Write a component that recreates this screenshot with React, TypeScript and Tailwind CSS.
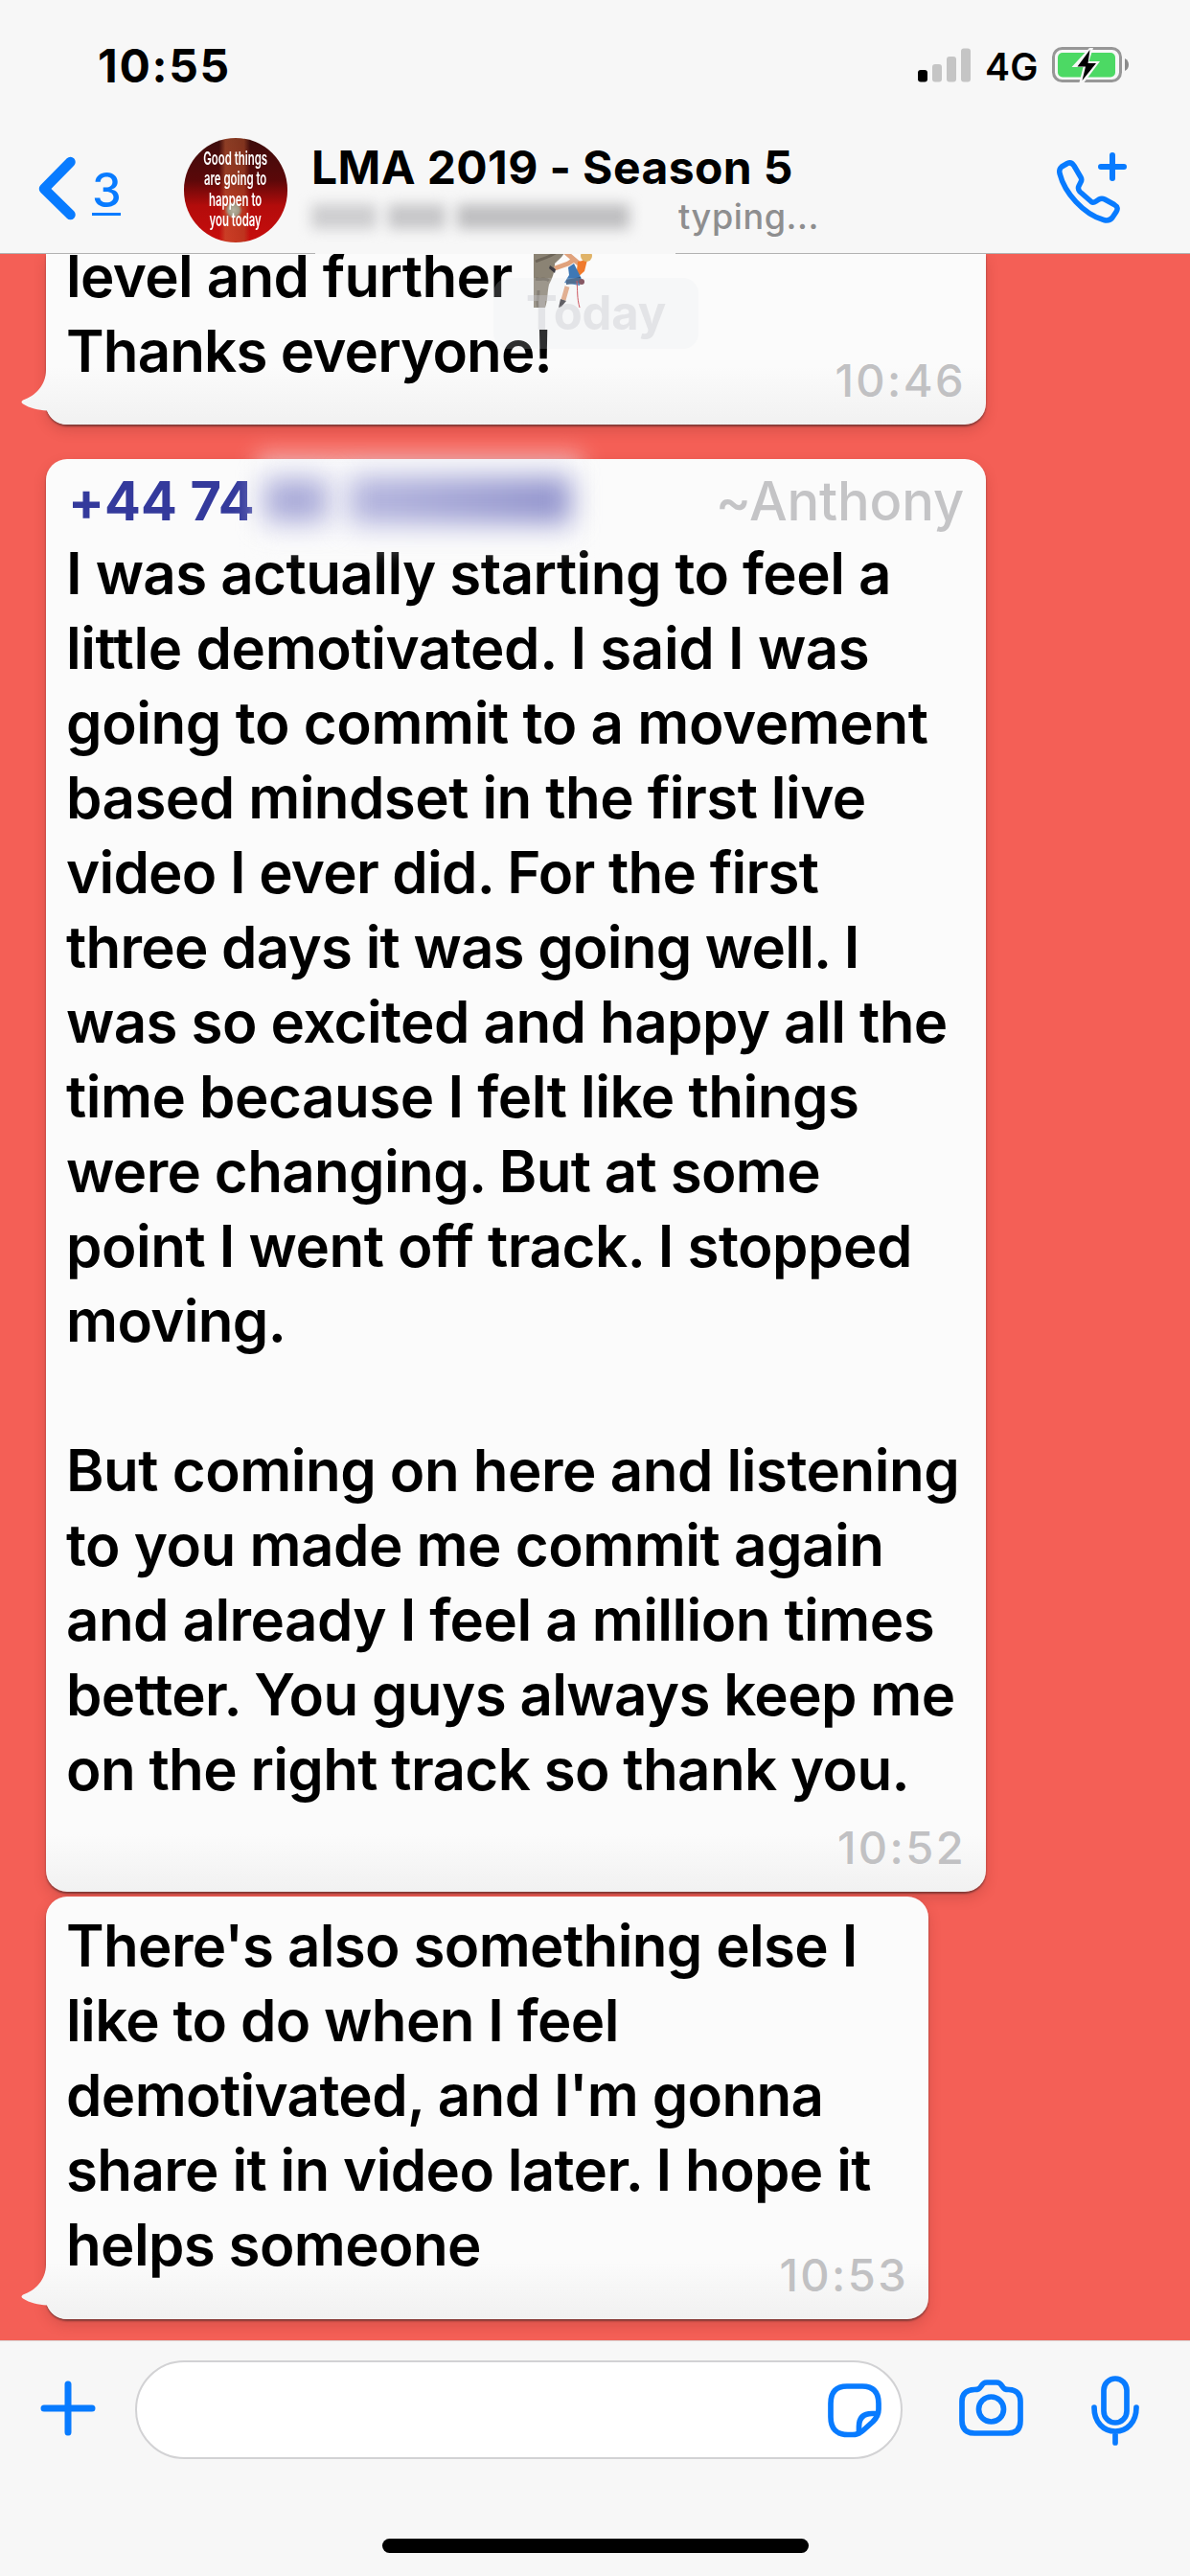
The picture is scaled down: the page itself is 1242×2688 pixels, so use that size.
import type { ReactNode } from "react";

type Line = {
  text: string;
  tracking?: string;
};

const STORY: Line[] = [
  { text: "I was actually starting to feel a", tracking: "tracking-[-0.550px]" },
  { text: "little demotivated. I said I was", tracking: "tracking-[-0.400px]" },
  { text: "going to commit to a movement", tracking: "tracking-[-0.400px]" },
  { text: "based mindset in the first live", tracking: "tracking-[-0.550px]" },
  { text: "video I ever did. For the first", tracking: "tracking-[-0.750px]" },
  { text: "three days it was going well. I", tracking: "tracking-[-0.750px]" },
  { text: "was so excited and happy all the", tracking: "tracking-[-0.550px]" },
  { text: "time because I felt like things", tracking: "tracking-[-0.480px]" },
  { text: "were changing. But at some" },
  { text: "point I went off track. I stopped", tracking: "tracking-[-0.480px]" },
  { text: "moving." },
  { text: "" },
  { text: "But coming on here and listening", tracking: "tracking-[-0.480px]" },
  { text: "to you made me commit again", tracking: "tracking-[-0.480px]" },
  { text: "and already I feel a million times", tracking: "tracking-[-0.550px]" },
  { text: "better. You guys always keep me" },
  { text: "on the right track so thank you." },
];

const FOLLOW_UP: Line[] = [
  { text: "There's also something else I" },
  { text: "like to do when I feel" },
  { text: "demotivated, and I'm gonna" },
  { text: "share it in video later. I hope it" },
  { text: "helps someone" },
];

export default function App() {
  return (
    <div className="flex h-[2688px] w-[1242px] flex-col overflow-hidden bg-[#f7f7f7] font-['Inter','Liberation_Sans',sans-serif] text-black">
      <StatusBar />
      <ChatHeader />
      <Conversation />
      <Composer />
    </div>
  );
}

function StatusBar() {
  return (
    <div className="flex h-[136px] shrink-0 items-start justify-between pt-[40px] pr-[63px] pl-[102px]">
      <div className="text-[48px] leading-[58px] font-bold tracking-[1.700px]">10:55</div>
      <div className="flex items-start">
        <svg className="mt-[10px] h-[36px] w-[56px]" viewBox="0 0 56 36">
          <rect x="0" y="23" width="10" height="12.5" rx="3" fill="#000" />
          <rect x="15" y="17" width="10" height="18.5" rx="3" fill="#c5c5c5" />
          <rect x="30" y="9" width="10" height="26.5" rx="3" fill="#c5c5c5" />
          <rect x="45" y="0.5" width="10" height="35" rx="3" fill="#c5c5c5" />
        </svg>
        <div className="mt-[7px] ml-[14px] w-[70px] text-[39px] leading-[46px] font-semibold tracking-[0.300px]">
          4G
        </div>
        <svg className="mt-[8px] h-[40px] w-[81px]" viewBox="0 0 81 40">
          <rect x="1.5" y="2.5" width="70" height="34" rx="9" fill="none" stroke="#979797" strokeWidth="3" />
          <rect x="6" y="7" width="60" height="25.5" rx="5" fill="#4cd964" />
          <path d="M76 13c3 1.500 4 4 4 6.500s-1 5-4 6.500z" fill="#8b8b8b" />
          <path
            d="M39 2 20.500 22h12L28.500 38h5L50 16H38.500L43 2z"
            fill="#f7f7f7"
          />
          <path d="M39.500 4 26.500 21.500h8.500L31.500 36 46 18h-8.500z" fill="#000" />
        </svg>
      </div>
    </div>
  );
}

function ChatHeader() {
  return (
    <div className="h-[129px] shrink-0">
      <div className="flex h-[128px] items-start pl-[38px]">
        <svg className="mt-[27px] h-[68px] w-[42px]" viewBox="0 0 42 68" fill="none">
          <path
            d="M35.500 6 8 34l27.500 27"
            stroke="#087bff"
            strokeWidth="10.500"
            strokeLinecap="round"
            strokeLinejoin="round"
          />
        </svg>
        <div className="mt-[32px] ml-[16px] h-[57px] w-[30px] border-b-[3px] border-[#087bff] text-center text-[49px] leading-[61px] font-medium text-[#087bff]">
          3
        </div>
        <Avatar />
        <div className="mt-[10px] ml-[25px] flex-1">
          <div className="text-[48px] leading-[57px] font-bold tracking-[0.400px] whitespace-nowrap">
            LMA 2019 - Season 5
          </div>
          <div className="mt-[1px] flex h-[44px] items-start">
            <div className="mt-[9px] flex h-[26px] w-[383px] gap-3 blur-[7px]">
              <div className="h-full w-[68px] bg-[#cdcdcf]" />
              <div className="h-full w-[60px] bg-[#c6c6c8]" />
              <div className="h-full w-[180px] bg-[#bebec0]" />
            </div>
            <div className="text-[36px] leading-[44px] font-medium tracking-[0.600px] text-[#8e8e8f]">typing...</div>
          </div>
        </div>
        <svg
          className="mt-[20px] mr-[61px] h-[78px] w-[80px]"
          viewBox="0 0 80 78"
          fill="none"
          stroke="#087bff"
          strokeLinecap="round"
          strokeLinejoin="round"
        >
          <path
            d="M7 18 13 14.500Q17 12.500 20 17L27 29Q28.500 31.500 27 34L25 38Q23.500 41 26 44L38 54.500Q40 56 43 54L46 52Q49 50.500 52 52L62 57.500Q67 60.500 64 65L60 71Q57 75 51 73.500C30 68 10 45 5 25Q4 20.500 7 18Z"
            strokeWidth="5.500"
          />
          <path d="M60 6v24M48 18h24" strokeWidth="6" />
        </svg>
      </div>
      {/* hairline, interrupted under the masked number */}
      <div className="flex h-px justify-between">
        <div className="w-[329px] bg-[#b2b2b2]" />
        <div className="w-[537px] bg-[#b2b2b2]" />
      </div>
    </div>
  );
}

function Avatar() {
  return (
    <div className="mt-[8px] ml-[66px] flex h-[109px] w-[108px] items-center justify-center overflow-hidden rounded-full bg-[radial-gradient(circle_at_48%_69%,#b9b2a0_0,#a09a84_6%,transparent_10%),linear-gradient(90deg,transparent_34%,#d0683b88_40%,#b9552d88_58%,transparent_64%),linear-gradient(180deg,#3c0d0c_0%,#5a0809_40%,#b30c0b_65%,#c80d0d_100%)]">
      <div className="-mt-[2px] scale-x-[0.600] text-center text-[19px] leading-[21.300px] font-semibold whitespace-nowrap text-white">
        Good things
        <br />
        are going to
        <br />
        happen to
        <br />
        you today
      </div>
    </div>
  );
}

function Conversation() {
  return (
    <div className="flex h-[2177px] shrink-0 flex-col items-start overflow-hidden bg-[#f45f56] pl-[48px]">
      <Bubble className="h-[178px] w-[981px] rounded-b-[22px]" time="10:46" tail>
        <div className="-mt-[16px] flex items-start">
          <TextLine line={{ text: "level and further" }} />
          <Climber />
        </div>
        <TextLine line={{ text: "Thanks everyone!", tracking: "tracking-[-0.850px]" }} />
        <div className="absolute top-[25px] left-[467px] flex h-[74px] w-[214px] items-center justify-center rounded-[16px] bg-[#e4ebf2]/20 text-[49px] font-bold tracking-[-0.200px] text-[#c9c9cc]/40">
          Today
        </div>
      </Bubble>

      <Bubble className="mt-[36px] h-[1495px] w-[981px] rounded-[22px] pt-[12px]" time="10:52">
        <div className="flex h-[68px] items-start justify-between pr-[23px]">
          <div className="pl-[2px] text-[56px] leading-[65px] font-bold tracking-[0.100px] text-[#343a9c]">+44 74</div>
          <div className="text-[56px] leading-[65px] font-medium tracking-[-0.150px] text-[#c4c4c6]">~Anthony</div>
        </div>
        {STORY.map((line, i) => (
          <TextLine key={i} line={line} />
        ))}
        {/* masked part of the phone number */}
        <div className="absolute top-[-6px] left-[220px] flex h-[98px] w-[340px] items-center">
          <div className="absolute inset-0 bg-[#fbfbfd]/50 blur-[12px]" />
          <div className="relative ml-[8px] h-[46px] w-[66px] bg-[#a9aad8] blur-[14px]" />
          <div className="relative ml-[22px] h-[50px] w-[232px] bg-[linear-gradient(90deg,#b5b6de,#9092cc)] blur-[14px]" />
        </div>
      </Bubble>

      <Bubble className="mt-[5px] h-[441px] w-[921px] rounded-[22px] pt-[12px]" time="10:53" tail>
        {FOLLOW_UP.map((line, i) => (
          <TextLine key={i} line={line} />
        ))}
      </Bubble>
    </div>
  );
}

function Bubble(props: { className: string; time: string; tail?: boolean; children: ReactNode }) {
  const { className, time, tail, children } = props;

  return (
    <div
      className={`relative shrink-0 bg-[linear-gradient(180deg,#fbfbfb_calc(100%-60px),#f1f1f1_100%)] pl-[21px] shadow-[0_2px_2px_rgba(70,40,40,0.6),0_6px_14px_rgba(90,20,20,0.18)] ${className}`}
    >
      {tail ? <Tail /> : null}
      {children}
      <div className="absolute right-[21px] bottom-[18px] text-[47px] leading-[56px] font-medium tracking-[2.400px] text-[#c1c1c3]">
        {time}
      </div>
    </div>
  );
}

function Tail() {
  return (
    <svg className="absolute bottom-0 left-[-26px] h-[63px] w-[48px] overflow-visible" viewBox="0 0 48 63">
      <defs>
        <linearGradient id="tail" x1="0" y1="0" x2="0" y2="1">
          <stop offset="0.050" stopColor="#fbfbfb" />
          <stop offset="1" stopColor="#f1f1f1" />
        </linearGradient>
      </defs>
      <path
        d="M26 0V6C26 22 15 33 2 37.500Q-1 39.500 2 41.500C9 46 18 48 27 48.500C30 57 38 63 48 63V0Z"
        fill="url(#tail)"
      />
    </svg>
  );
}

function TextLine({ line }: { line: Line }) {
  return (
    <div
      className={`h-[78px] text-[60px] leading-[78px] font-semibold whitespace-nowrap ${line.tracking ?? "tracking-[-0.640px]"}`}
    >
      {line.text}
    </div>
  );
}

function Climber() {
  return (
    <svg className="mt-[10px] ml-[22px] h-[62px] w-[66px]" viewBox="0 0 66 62">
      <path d="M0 0h34c-2 8-8 12-12 16 0 10-3 16-6 22-2 8-1 16-4 24H0z" fill="#8b8374" />
      <path d="M2 14c8-4 14-4 22-10M2 32c6 2 10-2 14 2M5 44c0 8-2 12 0 18" stroke="#6d6558" strokeWidth="3" fill="none" />
      <path d="M22 21 36 16l6-4M33 4l14 12M35 40l-4 14" stroke="#e0a27c" strokeWidth="5" fill="none" />
      <path d="M46 14 56 12 53 24 44 32z" fill="#f07a2c" />
      <path d="M36 20 42 16l8 16-2 7-16-3 5-8z" fill="#3e78b5" />
      <path d="m34 33 15-3v6l-15 2z" fill="#2c4f78" />
      <path d="m17 18 6 4-1 4-6-5zM28 53l6 2-5 6-3 1z" fill="#3f3c42" />
      <path d="M45 34c1 10 0 18 3 28" stroke="#c8323c" strokeWidth="1" fill="none" />
      <circle cx="55" cy="8" r="6" fill="#e0b368" />
      <circle cx="50" cy="35" r="3" fill="#6e3440" />
    </svg>
  );
}

function Composer() {
  return (
    <div className="flex flex-1 flex-col items-center border-t border-[#dcd0cf] bg-[#f7f7f7] pt-[20px]">
      <div className="flex w-full items-center pl-[42px]">
        <svg
          className="-mt-[4px] h-[58px] w-[58px]"
          viewBox="0 0 58 58"
          stroke="#087bff"
          strokeWidth="7"
          strokeLinecap="round"
        >
          <path d="M29 4v50M4 29h50" />
        </svg>
        <div className="ml-[41px] flex h-[103px] w-[801px] items-center justify-end rounded-full border-2 border-[#d2d2d4] bg-white pr-[18px]">
          <svg
            className="h-[60px] w-[60px]"
            viewBox="0 0 60 60"
            fill="none"
            stroke="#087bff"
            strokeWidth="5.700"
            strokeLinejoin="round"
          >
            <path d="M22 5H38Q55 5 55 23V29Q55 36 49 42L39 51Q34 55.500 28 55.500H23Q5 55.500 5 37V23Q5 5 22 5Z" />
            <path d="M54 33.500H48Q34.500 33.500 34.500 47V54" />
          </svg>
        </div>
        <svg
          className="-mt-[6px] ml-[58px] h-[62px] w-[70px]"
          viewBox="0 0 70 62"
          fill="none"
          stroke="#087bff"
          strokeWidth="5.700"
          strokeLinejoin="round"
        >
          <path d="M17 12.500C21 12.500 22 12 24 9Q26 5 30 5H40Q44 5 46 9C48 12 49 12.500 53 12.500Q65 13 65 25V45Q65 58 52 58H17Q4 58 4 45V25Q4 13 17 12.500Z" />
          <circle cx="34.500" cy="33" r="13" />
        </svg>
        <svg
          className="ml-[68px] h-[74px] w-[52px]"
          viewBox="0 0 52 74"
          fill="none"
          stroke="#087bff"
          strokeWidth="5.700"
          strokeLinecap="round"
        >
          <rect x="14" y="4" width="24" height="46" rx="12" />
          <path d="M4 34C4 50 14 59 26 59S48 50 48 34M26 59V71" />
        </svg>
      </div>
      <div className="mt-[83px] h-[15px] w-[445px] rounded-full bg-black" />
    </div>
  );
}
